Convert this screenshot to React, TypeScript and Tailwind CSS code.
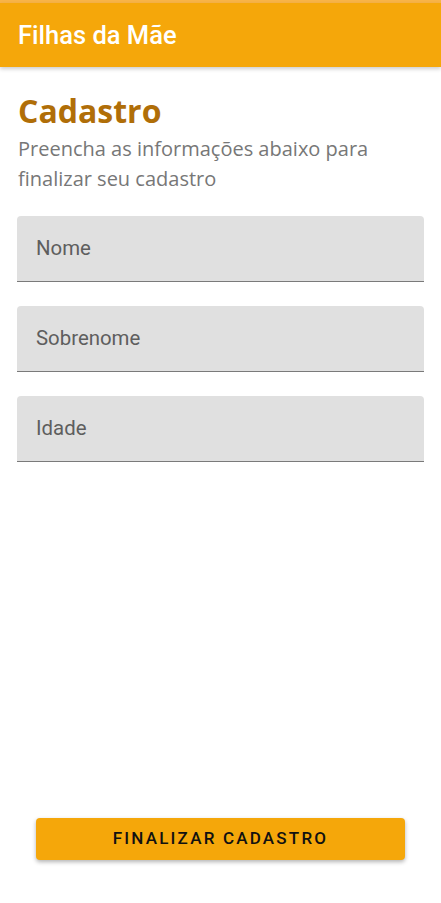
export default function App() {
  const fields = ["Nome", "Sobrenome", "Idade"];
  return (
    <div className="w-[441px] h-[903px] bg-white flex flex-col" style={{ fontFamily: "Roboto, sans-serif" }}>
      <div className="h-[3px] bg-[#f8b448]" />
      <header className="h-[64px] bg-[#f5a70a] flex items-center px-[18px] shadow-[0_2px_4px_rgba(0,0,0,0.2)] relative z-10">
        <h1 className="text-white text-[25.5px] font-medium">Filhas da Mãe</h1>
      </header>
      <main className="flex-1 flex flex-col px-[17px]">
        <h2 className="mt-[24px] ml-[1px] text-[32px] leading-[40px] font-bold text-[#b06e08]" style={{ fontFamily: '"Open Sans", sans-serif' }}>
          Cadastro
        </h2>
        <p className="mt-[3px] ml-[1px] text-[20px] leading-[30px] text-[#777777]" style={{ fontFamily: '"Open Sans", sans-serif' }}>
          Preencha as informações abaixo para finalizar seu cadastro
        </p>
        <div className="mt-[22px] flex flex-col gap-[24px]">
          {fields.map((f) => (
            <div key={f} className="h-[66px] bg-[#e0e0e0] rounded-t-[4px] border-b border-[#7a7a7a] flex items-center px-[19px]">
              <span className="text-[20.4px] text-[#5e5e5e]">{f}</span>
            </div>
          ))}
        </div>
        <div className="flex-1" />
        <div className="px-[19px] mb-[43px]">
          <button className="w-full h-[42px] bg-[#f5a70a] rounded-[4px] shadow-[0_2px_4px_rgba(0,0,0,0.3)] text-[17px] font-medium tracking-[2.2px] text-[#111111]">
            FINALIZAR CADASTRO
          </button>
        </div>
      </main>
    </div>
  );
}
